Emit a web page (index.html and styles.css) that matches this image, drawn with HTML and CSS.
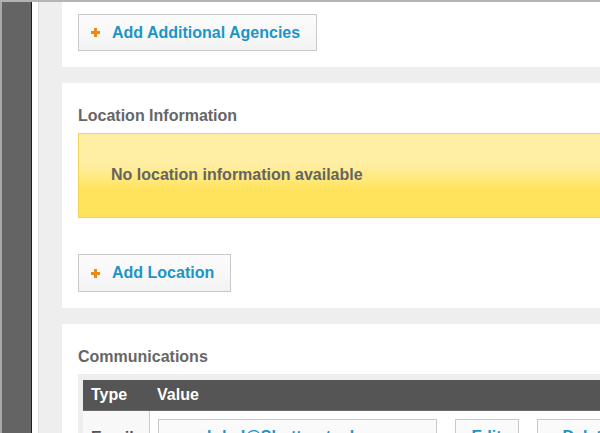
FILE: index.html
```html
<!DOCTYPE html>
<html>
<head>
<meta charset="utf-8">
<link rel="stylesheet" href="styles.css">
</head>
<body>
<div class="frame">
  <div class="sidebar"></div>
  <div class="rail"></div>
  <div class="gutter"></div>
  <main class="content">
    <section class="panel panel-first">
      <button class="btn btn-add"><span class="plus"></span><span>Add Additional Agencies</span></button>
    </section>
    <section class="panel">
      <h2 class="panel-title">Location Information</h2>
      <div class="notice">No location information available</div>
      <button class="btn btn-add btn-spaced"><span class="plus"></span><span>Add Location</span></button>
    </section>
    <section class="panel">
      <h2 class="panel-title">Communications</h2>
      <div class="table-wrap">
        <table class="comm-table">
          <thead>
            <tr><th class="col-type">Type</th><th>Value</th></tr>
          </thead>
          <tbody>
            <tr>
              <td class="col-type">Email</td>
              <td class="cell-actions">
                <button class="btn btn-value">ahdad@Shutterstock.com</button>
                <button class="btn btn-edit">Edit</button>
                <button class="btn btn-delete">Delete</button>
              </td>
            </tr>
          </tbody>
        </table>
      </div>
    </section>
  </main>
</div>
</body>
</html>
```

FILE: styles.css
```css
html, body {
  margin: 0;
  padding: 0;
}
body {
  width: 600px;
  height: 433px;
  overflow: hidden;
  font-family: "Liberation Sans", Arial, sans-serif;
  font-size: 16px;
  line-height: 18px;
}
.frame {
  display: flex;
  border-top: 2px solid #b4b4b4;
  border-left: 2px solid #a9a9a9;
  height: 431px;
  width: 760px;
}
.sidebar {
  width: 29px;
  flex: none;
  background: #646464;
  border-right: 1px solid #1e1e1e;
}
.rail {
  width: 6px;
  flex: none;
  background: #ffffff;
}
.gutter {
  width: 23px;
  flex: none;
  background: #eeeeee;
  border-left: 1px solid #dddddd;
}
.content {
  width: 700px;
  flex: none;
  background: #eeeeee;
  display: flex;
  flex-direction: column;
  gap: 16px;
}
.panel {
  background: #ffffff;
  padding: 24px 16px 16px 16px;
}
.panel-first {
  padding-top: 12px;
}
.panel-title {
  margin: 0 0 8px 0;
  font-size: 16px;
  line-height: 18px;
  font-weight: bold;
  color: #666666;
}
.btn {
  font-family: "Liberation Sans", Arial, sans-serif;
  font-size: 16px;
  line-height: 18px;
  font-weight: bold;
  color: #1b95c7;
  background: linear-gradient(to bottom, #fbfbfb 0%, #f8f8f8 55%, #f2f2f2 100%);
  border: 1px solid #c9c9c9;
  border-radius: 0;
  margin: 0;
  padding: 0;
  box-sizing: border-box;
  height: 37px;
}
.btn-add {
  display: flex;
  align-items: center;
  gap: 12px;
  padding: 0 16px 0 12px;
}
.btn-spaced {
  margin-top: 36px;
  height: 38px;
}
.plus {
  position: relative;
  width: 9px;
  height: 9px;
  flex: none;
}
.plus::before,
.plus::after {
  content: "";
  position: absolute;
  background: #ee8a12;
}
.plus::before {
  left: 0;
  top: 3px;
  width: 9px;
  height: 3px;
}
.plus::after {
  left: 3px;
  top: 0;
  width: 3px;
  height: 9px;
}
.notice {
  border: 1px solid #f6d44e;
  background: linear-gradient(to bottom, #ffefa5 0%, #ffefa5 36%, #ffe35c 68%, #ffe35c 100%);
  padding: 32px 32px 33px 32px;
  color: #646464;
  font-weight: bold;
}
.table-wrap {
  background: #eeeeee;
  padding: 6px 5px 0 5px;
}
.comm-table {
  width: 100%;
  border-collapse: collapse;
}
.comm-table th {
  background: #555555;
  color: #ffffff;
  text-align: left;
  font-weight: bold;
  padding: 6px 8px;
  height: 30px;
  box-sizing: border-box;
  border-bottom: 1px solid #6a6a6a;
}
.comm-table th.col-type {
  width: 66px;
  box-sizing: border-box;
}
.comm-table td {
  background: #ffffff;
  vertical-align: top;
  padding: 8px;
  color: #555555;
  font-weight: bold;
}
.comm-table td.col-type {
  background: #f8f8f8;
  border-right: 1px solid #cccccc;
  padding-top: 18px;
}
.cell-actions {
  display: flex;
  gap: 18px;
}
.btn-value,
.btn-edit,
.btn-delete {
  height: auto;
  padding: 8px 0 12px 0;
  text-align: center;
}
.btn-value {
  width: 279px;
}
.btn-edit {
  width: 64px;
}
.btn-delete {
  width: 100px;
}
```
